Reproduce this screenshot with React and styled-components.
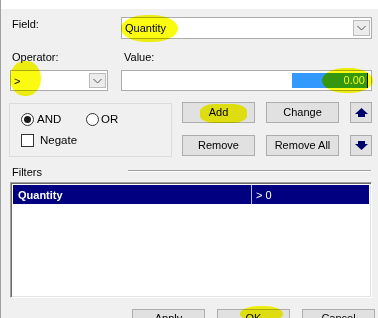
import React from 'react';
import styled, { createGlobalStyle } from 'styled-components';

const Global = createGlobalStyle`
  html, body { margin: 0; padding: 0; background: #f0f0f0; }
  body { font-family: "Liberation Sans", Arial, sans-serif; font-size: 11px; color: #000; }
  * { box-sizing: border-box; }
`;

const Window = styled.div`
  position: relative;
  width: 378px;
  height: 318px;
  overflow: hidden;
  display: flex;
  flex-direction: column;
  background: #f0f0f0;
`;

const TopStrip = styled.div`
  flex: none;
  height: 9px;
  background: #fff;
  border-left: 1px solid #a0a0a0;
`;

const Body = styled.div`
  flex: 1;
  border-left: 1px solid #a0a0a0;
  padding: 8px 6px 0 9px;
  display: flex;
  flex-direction: column;
`;

const FormRow = styled.div`
  display: grid;
  grid-template-columns: ${p => p.$left}px 1fr;
  column-gap: ${p => p.$gap || 0}px;
  height: ${p => p.$h}px;
  margin-top: ${p => p.$mt || 0}px;
`;

const Label = styled.div`
  padding-left: ${p => p.$pl || 2}px;
  padding-top: ${p => p.$pt || 0}px;
  line-height: 13px;
  white-space: nowrap;
`;

const Combo = styled.div`
  height: 100%;
  border: 1px solid #acacac;
  background: #fff;
  display: flex;
  align-items: stretch;
  padding: 2px 1px 2px 3px;
`;

const ComboText = styled.span`
  flex: 1;
  display: flex;
  align-items: center;
`;

const DropBtn = styled.div`
  width: 17px;
  border: 1px solid #bcbcbc;
  background: #ececec;
  display: flex;
  align-items: center;
  justify-content: center;
`;

const TextBox = styled.div`
  height: 100%;
  border: 1px solid #acacac;
  background: #fff;
  display: flex;
  align-items: center;
  justify-content: flex-end;
  padding-right: 3px;
`;

const Selection = styled.span`
  width: 75px;
  height: 15px;
  background: #3399ff;
  color: #fff;
  text-align: right;
  line-height: 15px;
  padding-right: 2px;
`;

const Caret = styled.span`
  width: 1px;
  height: 15px;
  background: #000;
`;

const MidRow = styled.div`
  display: flex;
  margin-top: 11px;
  height: 55px;
`;

const GroupBox = styled.div`
  width: 163px;
  height: 54px;
  margin-left: -1px;
  margin-top: 1px;
  border: 1px solid #dcdcdc;
  padding: 9px 0 0 11px;
  display: flex;
  flex-direction: column;
  gap: 8px;
`;

const OptionLine = styled.div`
  display: flex;
  align-items: center;
  height: 13px;
`;

const Option = styled.label`
  display: flex;
  align-items: center;
  width: ${p => p.$w || 'auto'};
  gap: ${p => p.$gap}px;
  line-height: 13px;
  font-size: 11.5px;
`;

const Radio = styled.span`
  width: 13px;
  height: 13px;
  border-radius: 50%;
  border: 1px solid #333;
  background: #fff;
  display: flex;
  align-items: center;
  justify-content: center;
  &::after {
    content: '';
    width: 7px;
    height: 7px;
    border-radius: 50%;
    background: ${p => (p.$on ? '#1a1a1a' : 'transparent')};
  }
`;

const Check = styled.span`
  width: 13px;
  height: 13px;
  border: 1px solid #333;
  background: #fff;
`;

const ButtonGrid = styled.div`
  margin-left: 10px;
  display: grid;
  grid-template-columns: 73px 73px 22px;
  grid-auto-rows: 21px;
  column-gap: 11px;
  row-gap: 12px;
`;

const Button = styled.button`
  font: inherit;
  color: #000;
  height: ${p => p.$h || 21}px;
  width: ${p => p.$w || 'auto'};
  padding: ${p => (p.$top ? '2px 0 0' : '0')};
  border: 1px solid #adadad;
  background: #e1e1e1;
  display: flex;
  align-items: ${p => (p.$top ? 'flex-start' : 'center')};
  justify-content: center;
  line-height: 13px;
`;

const FiltersHead = styled.div`
  display: flex;
  align-items: flex-start;
  margin-top: 9px;
  height: 15px;
`;

const Etch = styled.div`
  flex: 1;
  margin-left: 86px;
  margin-top: 4px;
  height: 2px;
  border-top: 1px solid #a0a0a0;
  border-bottom: 1px solid #fff;
  margin-right: 1px;
`;

const ListBox = styled.div`
  margin-top: 1px;
  height: 116px;
  background: #fff;
  border-top: 1px solid #a0a0a0;
  border-left: 1px solid #a0a0a0;
  border-right: 1px solid #fff;
  border-bottom: 1px solid #fff;
  box-shadow: inset 1px 1px 0 #696969, inset -1px -1px 0 #e3e3e3;
  padding: 2px 2px 0 2px;
`;

const ListRow = styled.div`
  display: grid;
  grid-template-columns: 239px 1fr;
  height: 19px;
  background: ${p => (p.$selected ? '#000080' : 'transparent')};
  color: ${p => (p.$selected ? '#fff' : '#000')};
`;

const Cell = styled.div`
  display: flex;
  align-items: center;
  padding-left: ${p => p.$pl}px;
  font-weight: ${p => (p.$bold ? 700 : 400)};
  border-right: ${p => (p.$divider ? '1px solid #b8b8e0' : 'none')};
`;

const Footer = styled.div`
  display: flex;
  justify-content: flex-end;
  gap: 12px;
  margin-top: 11px;
  margin-right: -3px;
`;

const Marker = styled.div`
  position: absolute;
  left: ${p => p.$x}px;
  top: ${p => p.$y}px;
  width: ${p => p.$w}px;
  height: ${p => p.$h}px;
  background: #fbfb10;
  border-radius: ${p => p.$r || '45% / 50%'};
  mix-blend-mode: multiply;
  pointer-events: none;
`;

const Chevron = () => (
  <svg width="9" height="6" viewBox="0 0 9 6">
    <polyline points="0.5,1 4.5,5 8.5,1" fill="none" stroke="#555" strokeWidth="1" />
  </svg>
);

const ArrowUp = () => (
  <svg width="13" height="9" viewBox="0 0 13 9">
    <polygon points="6.5,0 13,6 0,6" fill="#00006a" />
    <rect x="3" y="6" width="7" height="3" fill="#00006a" />
  </svg>
);

const ArrowDown = () => (
  <svg width="13" height="9" viewBox="0 0 13 9">
    <rect x="3" y="0" width="7" height="3" fill="#00006a" />
    <polygon points="0,3 13,3 6.5,9" fill="#00006a" />
  </svg>
);

export default function App() {
  return (
    <>
      <Global />
      <Window>
        <TopStrip />
        <Body>
          <FormRow $left={111} $h={22}>
            <Label $pt={1}>Field:</Label>
            <Combo>
              <ComboText>Quantity</ComboText>
              <DropBtn><Chevron /></DropBtn>
            </Combo>
          </FormRow>

          <FormRow $left={111} $h={13} $mt={12}>
            <Label>Operator:</Label>
            <Label $pl={3}>Value:</Label>
          </FormRow>

          <FormRow $left={98} $gap={13} $h={21} $mt={6}>
            <Combo>
              <ComboText>&gt;</ComboText>
              <DropBtn><Chevron /></DropBtn>
            </Combo>
            <TextBox>
              <Selection>0.00</Selection>
              <Caret />
            </TextBox>
          </FormRow>

          <MidRow>
            <GroupBox>
              <OptionLine>
                <Option $w="65px" $gap={3}><Radio $on />AND</Option>
                <Option $gap={2}><Radio />OR</Option>
              </OptionLine>
              <OptionLine>
                <Option $gap={6}><Check />Negate</Option>
              </OptionLine>
            </GroupBox>
            <ButtonGrid>
              <Button>Add</Button>
              <Button>Change</Button>
              <Button><ArrowUp /></Button>
              <Button>Remove</Button>
              <Button>Remove All</Button>
              <Button><ArrowDown /></Button>
            </ButtonGrid>
          </MidRow>

          <FiltersHead>
            <Label>Filters</Label>
            <Etch />
          </FiltersHead>

          <ListBox>
            <ListRow $selected>
              <Cell $pl={5} $bold $divider>Quantity</Cell>
              <Cell $pl={4}>&gt; 0</Cell>
            </ListRow>
          </ListBox>

          <Footer>
            <Button $w="73px" $h={23} $top>Apply</Button>
            <Button $w="73px" $h={23} $top>OK</Button>
            <Button $w="73px" $h={23} $top>Cancel</Button>
          </Footer>
        </Body>

        <Marker $x={121} $y={15} $w={57} $h={27} />
        <Marker $x={10} $y={61} $w={31} $h={35} />
        <Marker $x={322} $y={68} $w={51} $h={25} />
        <Marker $x={200} $y={104} $w={47} $h={19} $r="30% / 40%" />
        <Marker $x={240} $y={306} $w={43} $h={16} />
      </Window>
    </>
  );
}
